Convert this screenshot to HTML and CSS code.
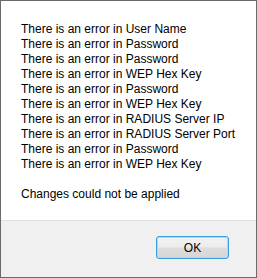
FILE: index.html
```html
<!DOCTYPE html>
<html>
<head>
<meta charset="utf-8">
<link rel="stylesheet" href="styles.css">
</head>
<body>
<div class="dialog">
  <div class="content">
    <div class="line">There is an error in User Name</div>
    <div class="line">There is an error in Password</div>
    <div class="line">There is an error in Password</div>
    <div class="line">There is an error in WEP Hex Key</div>
    <div class="line">There is an error in Password</div>
    <div class="line">There is an error in WEP Hex Key</div>
    <div class="line">There is an error in RADIUS Server IP</div>
    <div class="line">There is an error in RADIUS Server Port</div>
    <div class="line">There is an error in Password</div>
    <div class="line">There is an error in WEP Hex Key</div>
    <div class="line blank">&nbsp;</div>
    <div class="line">Changes could not be applied</div>
  </div>
  <div class="footer">
    <button class="btn">OK</button>
  </div>
</div>
</body>
</html>
```

FILE: styles.css
```css
html, body {
  margin: 0;
  padding: 0;
  background: #ffffff;
}
.dialog {
  width: 257px;
  height: 278px;
  box-sizing: border-box;
  border: 1px solid #6a6a6a;
  display: flex;
  flex-direction: column;
  font-family: "Liberation Sans", Arial, sans-serif;
  font-size: 12px;
  color: #000;
}
.content {
  flex: 0 0 auto;
  height: 220px;
  box-sizing: border-box;
  padding: 21px 0 0 20px;
  background: #fff;
  border-bottom: 1px solid #dfdfdf;
}
.line {
  line-height: 15px;
  height: 15px;
  white-space: nowrap;
}
.footer {
  flex: 1 1 auto;
  background: #f0f0f0;
  display: flex;
  justify-content: flex-end;
  align-items: flex-start;
  padding: 15px 27px 0 0;
}
.btn {
  width: 73px;
  height: 23px;
  box-sizing: border-box;
  border: 1px solid #3c9ee0;
  border-radius: 3px;
  box-shadow: inset 0 0 0 1px #a7dcf6;
  background: linear-gradient(to bottom, #f3f3f3 0%, #ececec 48%, #dddddd 52%, #d6d6d6 100%);
  font-family: "Liberation Sans", Arial, sans-serif;
  font-size: 12px;
  color: #000;
  padding: 0;
}
```
